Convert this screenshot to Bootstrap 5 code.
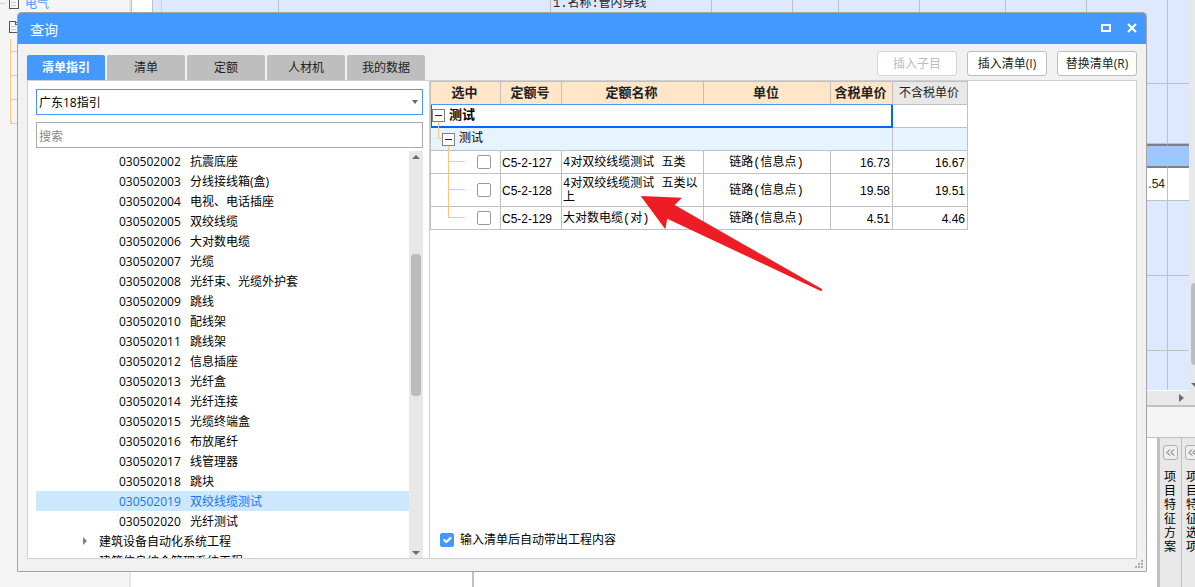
<!DOCTYPE html>
<html lang="zh-CN">
<head>
<meta charset="utf-8">
<meta name="viewport" content="width=device-width, initial-scale=1">
<title>查询</title>
<link href="https://cdn.jsdelivr.net/npm/bootstrap@5.3.0/dist/css/bootstrap.min.css" rel="stylesheet">
<style>
:root { --line:#c0c0c0; --blue:#4499ff; --soft:#d0d0d0; --track:#e8e8e8; --twig:#ffc878; }
body { font-family:"Open Sans","Noto Sans CJK SC",sans-serif; font-size:12px; line-height:20px; color:#000; background:#fff; overflow:hidden; }
.pixel { font-family:"Liberation Mono","Noto Sans CJK SC",monospace; }

/* main window behind the dialog */
.side-tree { width:131px; background:#f5f5f5; border-right:2px solid #e6e6e6; }
.side-tree a { color:var(--blue); margin:-6px 0 0 25px; }
.side-tree svg { left:0; top:0; }
.gutter { width:22px; border-left:1px solid var(--line); border-right:1px solid var(--line); }
.bill { border-collapse:separate; border-spacing:0; table-layout:fixed; background:#dde9fe; color:#222; }
.bill td { border-right:1px solid var(--line); border-bottom:1px solid var(--line); padding:0 2px; line-height:14px; vertical-align:top; }
.bill td:first-child { border-right-color:var(--twig); }
.bill td:last-child { border-right:0; }
.bill .num { vertical-align:middle; text-align:right; font-size:12px; font-family:"Liberation Sans",sans-serif; }
.bill .picked td { background:#9fc7ff; border-top:2px solid #808080; border-bottom:2px solid #808080; }
.bill .plain td { background:#fff; }
.bill .lines { margin-top:-3px; height:16px; }
.bill tr:last-child td { border-bottom:0; }
.vbar { width:6px; background:var(--track); }
.vbar i { position:absolute; top:283px; left:2px; right:0; height:82px; background:#bcbcbc; border-radius:4px 0 0 4px; }
.hbar { height:14px; margin-top:1px; background:var(--track); padding-right:9px; }
.strip { height:33px; background:#f5f5f5; border-top:2px solid var(--line); border-bottom:1px solid var(--line); }
.lower-left { width:341px; }
.lower-mid { border-left:2px solid var(--line); }
.dock { width:38px; border-left:3px solid var(--line); background:var(--track); }
.dock section { width:22px; flex:none; border-right:1px solid var(--line); padding:7px 3px; line-height:14px; }
.dock button { width:15px; height:15px; border:1px solid #b0b0b0; border-radius:3px; background:#eee; padding:0; margin-bottom:10px; display:flex; align-items:center; justify-content:center; }
.dock p { width:12px; word-break:break-all; margin:0 0 0 1px; }

/* dialog */
.query { position:absolute; top:12px; right:48px; bottom:15px; left:17px; background:#f1f1f1; border:1px solid #a4a4a4; border-radius:4px 4px 0 0; }
.query-title { height:31px; background:var(--blue); color:#fff; font-size:14px; padding:0 8px 0 12px; border-radius:3px 3px 0 0; }
.query-title h1 { font-size:14px; font-weight:400; margin:3px 0 0; }
.query-title button { border:0; background:none; padding:0; width:12px; height:12px; display:flex; color:#fff; }
.toolbar { height:36px; padding:0 9px; }
.tabs { gap:2px; }
.tabs button { width:78px; height:25px; border:0; border-radius:2px 2px 0 0; background:#bebebe; color:#222; padding:1px 0 0; }
.tabs button.active { background:var(--blue); color:#fff; font-weight:700; }
.acts { gap:10px; padding-top:7px; }
.acts .btn { width:80px; height:25px; padding:0; font-size:12px; line-height:20px; border:1px solid #bdbdbd; border-radius:3px; background:#fff; color:#222; white-space:nowrap; }
.acts .btn:disabled { color:#bbb; border-color:#d4d4d4; opacity:1; }
.panes { margin:0 9px 12px; border:1px solid var(--soft); background:#fff; min-height:0; }
.left-pane { width:402px; flex:none; border-right:1px solid var(--soft); padding:8px 6px 0 8px; }
.pick, .find { height:26px; width:100%; border-radius:0; padding:2px 2px 0; font-size:12px; line-height:20px; background:#fff; color:#000; appearance:none; display:block; }
.pick { border:1px solid var(--blue); }
.find { border:1px solid #aaa; margin:7px 0 3px; }
.find::placeholder { color:#888; }
.pick-wrap::after { content:""; position:absolute; right:5px; top:11px; border:3px solid transparent; border-top:4px solid #666; border-bottom:0; }
.tree { overflow:hidden; }
.tree li { height:20px; line-height:22px; padding-left:83px; gap:8px; white-space:nowrap; }
.tree li span { width:63px; }
.tree li.on { background:#cce8ff; color:#1a73e8; }
.tree li.folder { padding-left:46px; gap:11px; }
.track { width:14px; background:var(--track); }
.track i { position:absolute; left:2px; right:2px; top:103px; height:142px; border-radius:4px; background:#bcbcbc; }
.tri { width:8px; height:4px; background:#666b75; position:absolute; left:3px; }
.tri.up { top:4px; clip-path:polygon(50% 0,100% 100%,0 100%); }
.tri.down { bottom:3px; clip-path:polygon(0 0,100% 0,50% 100%); }

.quota { border-collapse:separate; border-spacing:0; table-layout:fixed; width:538px; border-top:1px solid var(--line); border-left:1px solid var(--line); line-height:14px; }
.quota th, .quota td { border-right:1px solid var(--line); border-bottom:1px solid var(--line); height:23px; padding:2px 2px 0 1px; }
.quota th { background:#ffe6c8; font-size:13px; text-align:center; white-space:nowrap; padding:2px 2px 0 0; color:#222; }
.quota th.off { background:#e8e8e8; font-size:12px; font-weight:400; }
.quota .chosen { border-right:2px solid #0066ff; border-bottom:2px solid #0066ff; box-shadow:inset 1px 0 #0066ff; font-size:13px; font-weight:700; padding:0 0 0 1px; }
.quota thead th:not(.off) { border-bottom-color:var(--blue); }
.quota .sub td { background:#e6f4ff; }
.quota td.twig { padding:0; }
.quota .sub td:first-child { padding-left:11px; }
.fold { width:13px; height:13px; border:1px solid #808080; background:#fff; padding:0; position:relative; z-index:1; display:block; flex:none; }
.fold::after { content:""; position:absolute; left:2px; right:2px; top:5px; height:1px; background:#222; }
.code, .price { font-family:"Liberation Sans",sans-serif; font-size:12px; }
.code { white-space:nowrap; }
.price { text-align:right; }
.twig { position:relative; }
.twig::before, .twig::after { content:""; position:absolute; background:var(--twig); left:17px; }
.twig::before { width:1px; top:0; bottom:0; }
.twig::after { width:17px; height:1px; top:calc(50% - 1px); }
.twig.first::before { top:-5px; }
.twig.last::before { bottom:50%; }
.twig.root::before { left:7px; top:-6px; bottom:50%; }
.twig.root::after { left:7px; width:4px; }
.form-check-input.tick { width:14px; height:14px; margin:0; border:1px solid #999; border-radius:2px; float:none; display:block; flex:none; }
.form-check-input.tick:checked { background-color:var(--blue); border-color:var(--blue); background-size:14px 14px; }
.quota .tick { margin-left:46px; }
.auto { padding:0 10px 7px; gap:6px; line-height:22px; }
.pointer { position:absolute; left:210px; top:114px; }
.grip { position:absolute; right:3px; bottom:3px; }
</style>
</head>
<body>
<div class="d-flex vh-100 position-relative overflow-hidden">
  <aside class="side-tree flex-shrink-0 position-relative">
    <svg class="position-absolute" width="20" height="130" fill="none" shape-rendering="crispEdges">
      <path d="M0 3.500h5M10.500 39v84.500h9M10.500 51.500h9M10.500 75.500h9M10.500 99.500h9" stroke="#ffc878"/>
      <path d="M9.500-3v11.500h9V0M9.500 21.500h6l3 3v8h-9zM15.500 21.500v3h3" stroke="#555"/>
      <path d="M11 2.500h5M11 5.500h5M11 26.500h5M11 29.500h5" stroke="#ccc"/>
    </svg>
    <a href="#" class="d-block text-decoration-none">电气</a>
  </aside>
  <main class="flex-grow-1 d-flex flex-column" style="min-width:0">
    <div class="d-flex">
      <div class="gutter flex-shrink-0"></div>
      <div class="flex-grow-1">
        <table class="bill pixel w-100">
          <colgroup><col width="9"><col width="117"><col width="272"><col width="161"><col width="81"><col width="46"><col width="81"><col width="86"><col width="81"><col width="81"><col></colgroup>
          <tbody>
            <tr height="84"><td></td><td></td><td></td><td><div class="lines">1.名称:管内穿线</div></td><td></td><td></td><td></td><td></td><td></td><td></td><td></td></tr>
            <tr height="60"><td></td><td></td><td></td><td></td><td></td><td></td><td></td><td></td><td></td><td></td><td></td></tr>
            <tr height="24" class="picked"><td></td><td></td><td></td><td></td><td></td><td></td><td></td><td></td><td></td><td></td><td></td></tr>
            <tr height="33" class="plain"><td></td><td></td><td></td><td></td><td></td><td></td><td></td><td></td><td></td><td class="num">.54</td><td></td></tr>
            <tr height="75"><td></td><td></td><td></td><td></td><td></td><td></td><td></td><td></td><td></td><td></td><td></td></tr>
            <tr height="75"><td></td><td></td><td></td><td></td><td></td><td></td><td></td><td></td><td></td><td></td><td></td></tr>
            <tr height="39"><td></td><td></td><td></td><td></td><td></td><td></td><td></td><td></td><td></td><td></td><td></td></tr>
          </tbody>
        </table>
        <div class="hbar d-flex justify-content-end align-items-center"><svg class="d-block" style="margin-right:-4px" width="5" height="8"><path d="M0 0l5 4-5 4z" fill="#666b75"/></svg></div>
      </div>
      <div class="vbar position-relative flex-shrink-0 overflow-hidden"><i></i><svg class="position-absolute" style="left:2px;bottom:18px" width="8" height="4"><path d="M0 0h8l-4 4z" fill="#666b75"/></svg></div>
    </div>
    <div class="strip flex-shrink-0"></div>
    <div class="d-flex flex-grow-1">
      <div class="lower-left"></div>
      <div class="lower-mid flex-grow-1"></div>
      <div class="dock d-flex overflow-hidden">
        <section><button type="button" aria-label="展开项目特征方案"><svg width="9" height="7" fill="none" stroke="#555"><path d="M4 .5l-3 3 3 3M8 .5l-3 3 3 3"/></svg></button><p>项目特征方案</p></section>
        <section><button type="button" aria-label="展开项目特征选项"><svg width="9" height="7" fill="none" stroke="#555"><path d="M4 .5l-3 3 3 3M8 .5l-3 3 3 3"/></svg></button><p>项目特征选项</p></section>
      </div>
    </div>
  </main>

  <div class="query d-flex flex-column" role="dialog" aria-labelledby="dlgTitle">
    <header class="query-title d-flex align-items-center justify-content-between flex-shrink-0">
      <h1 id="dlgTitle">查询</h1>
      <div class="d-flex" style="gap:14px">
        <button type="button" aria-label="最大化"><svg width="12" height="12" shape-rendering="crispEdges"><path d="M2 2h8v6H2z" fill="none" stroke="#fff" stroke-width="2"/></svg></button>
        <button type="button" aria-label="关闭"><svg width="12" height="12"><path d="M2 1l8 8M10 1l-8 8" stroke="#fff" stroke-width="2"/></svg></button>
      </div>
    </header>
    <div class="toolbar d-flex justify-content-between flex-shrink-0">
      <div class="tabs d-flex align-items-end" role="tablist">
        <button type="button" role="tab" class="active" aria-selected="true">清单指引</button>
        <button type="button" role="tab">清单</button>
        <button type="button" role="tab">定额</button>
        <button type="button" role="tab">人材机</button>
        <button type="button" role="tab">我的数据</button>
      </div>
      <div class="acts d-flex align-items-start">
        <button type="button" class="btn" disabled>插入子目</button>
        <button type="button" class="btn">插入清单(I)</button>
        <button type="button" class="btn">替换清单(R)</button>
      </div>
    </div>
    <div class="panes d-flex flex-grow-1">
      <div class="left-pane d-flex flex-column">
        <div class="pick-wrap position-relative">
          <select class="pick" aria-label="指引库"><option>广东18指引</option></select>
        </div>
        <input class="find flex-shrink-0" type="text" placeholder="搜索" aria-label="搜索">
        <div class="d-flex flex-grow-1" style="min-height:0">
          <ul class="tree list-unstyled flex-grow-1 mb-0">
            <li class="d-flex"><span>030502002</span>抗震底座</li>
            <li class="d-flex"><span>030502003</span>分线接线箱(盒)</li>
            <li class="d-flex"><span>030502004</span>电视、电话插座</li>
            <li class="d-flex"><span>030502005</span>双绞线缆</li>
            <li class="d-flex"><span>030502006</span>大对数电缆</li>
            <li class="d-flex"><span>030502007</span>光缆</li>
            <li class="d-flex"><span>030502008</span>光纤束、光缆外护套</li>
            <li class="d-flex"><span>030502009</span>跳线</li>
            <li class="d-flex"><span>030502010</span>配线架</li>
            <li class="d-flex"><span>030502011</span>跳线架</li>
            <li class="d-flex"><span>030502012</span>信息插座</li>
            <li class="d-flex"><span>030502013</span>光纤盒</li>
            <li class="d-flex"><span>030502014</span>光纤连接</li>
            <li class="d-flex"><span>030502015</span>光缆终端盒</li>
            <li class="d-flex"><span>030502016</span>布放尾纤</li>
            <li class="d-flex"><span>030502017</span>线管理器</li>
            <li class="d-flex"><span>030502018</span>跳块</li>
            <li class="d-flex on"><span>030502019</span>双绞线缆测试</li>
            <li class="d-flex"><span>030502020</span>光纤测试</li>
            <li class="d-flex folder"><svg class="align-self-center" width="6" height="8"><path d="M1 0l4 4-4 4z" fill="#808080"/></svg>建筑设备自动化系统工程</li>
            <li class="d-flex folder"><svg width="6" height="8"></svg>建筑信息综合管理系统工程</li>
          </ul>
          <div class="track position-relative flex-shrink-0"><b class="tri up"></b><i></i><b class="tri down"></b></div>
        </div>
      </div>
      <div class="flex-grow-1 d-flex flex-column position-relative">
        <table class="quota pixel">
          <colgroup><col width="70"><col width="61"><col width="142"><col width="127"><col width="62"><col width="75"></colgroup>
          <thead><tr><th>选中</th><th>定额号</th><th>定额名称</th><th>单位</th><th>含税单价</th><th class="off">不含税单价</th></tr></thead>
          <tbody>
            <tr><td colspan="5" class="chosen"><div class="d-flex align-items-center" style="gap:4px"><button type="button" class="fold" aria-label="折叠"></button>测试</div></td><td></td></tr>
            <tr class="sub"><td colspan="5" class="twig root"><div class="d-flex align-items-center" style="gap:4px"><button type="button" class="fold" aria-label="折叠"></button>测试</div></td><td></td></tr>
            <tr><td class="twig first"><input type="checkbox" class="form-check-input tick" aria-label="选中 C5-2-127"></td><td class="code">C5-2-127</td><td>4对双绞线缆测试 五类</td><td class="text-center">链路(信息点)</td><td class="price">16.73</td><td class="price">16.67</td></tr>
            <tr height="33"><td class="twig"><input type="checkbox" class="form-check-input tick" aria-label="选中 C5-2-128"></td><td class="code">C5-2-128</td><td>4对双绞线缆测试 五类以上</td><td class="text-center">链路(信息点)</td><td class="price">19.58</td><td class="price">19.51</td></tr>
            <tr><td class="twig last"><input type="checkbox" class="form-check-input tick" aria-label="选中 C5-2-129"></td><td class="code">C5-2-129</td><td>大对数电缆(对)</td><td class="text-center">链路(信息点)</td><td class="price">4.51</td><td class="price">4.46</td></tr>
          </tbody>
        </table>
        <svg class="pointer" width="184" height="98"><path d="M0.700 1L42 2.700 34.700 10 181.500 93.700Q183 95.500 180.700 96L27.300 23.700 25.300 34.300z" fill="#ee1c25"/></svg>
        <div class="auto d-flex align-items-center mt-auto">
          <input type="checkbox" class="form-check-input tick" id="autoBring" checked>
          <label for="autoBring">输入清单后自动带出工程内容</label>
        </div>
      </div>
    </div>
    <svg class="grip" width="8" height="8" fill="#aaa"><path d="M6 0h2v2H6zM3 3h2v2H3zM6 3h2v2H6zM0 6h2v2H0zM3 6h2v2H3zM6 6h2v2H6z"/></svg>
  </div>
</div>
<script src="https://cdn.jsdelivr.net/npm/bootstrap@5.3.0/dist/js/bootstrap.bundle.min.js"></script>
</body>
</html>
